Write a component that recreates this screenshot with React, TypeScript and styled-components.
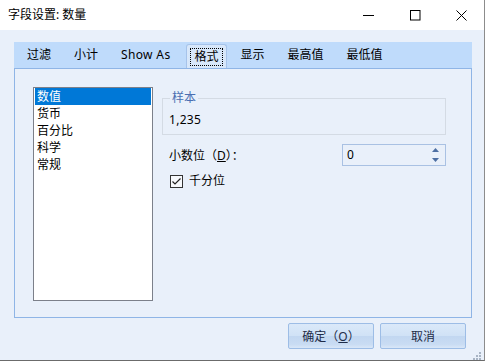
import React, { useState } from 'react';
import styled, { createGlobalStyle } from 'styled-components';

const GlobalStyle = createGlobalStyle`
  body {
    margin: 0;
    background: #ffffff;
    font-family: "Noto Sans", "Noto Sans CJK SC", sans-serif;
    font-size: 12px;
    color: #000;
  }
`;

const Window = styled.div`
  position: relative;
  width: 484px;
  height: 360px;
  border-right: 1px solid #8c8c8c;
  border-bottom: 1px solid #6b6b6b;
  display: flex;
  flex-direction: column;
  overflow: hidden;
`;

const TitleBar = styled.div`
  height: 30px;
  flex: none;
  background: #ffffff;
  display: flex;
  align-items: center;
  padding-left: 8px;
`;

const Title = styled.div`
  flex: 1;
  font-size: 12px;
  line-height: 16px;
  margin-top: -1px;
`;

const Control = styled.div`
  width: 46px;
  height: 30px;
  display: flex;
  align-items: center;
  justify-content: center;
`;

const Body = styled.div`
  flex: 1;
  background: #e9f0fa;
  padding: 12px 12px 0 14px;
  display: flex;
  flex-direction: column;
`;

const TabStrip = styled.div`
  height: 26px;
  background: #bfdbfb;
  display: flex;
  align-items: flex-end;
  padding-left: 5px;
  gap: 7px;
`;

const Tab = styled.div<{ $active?: boolean }>`
  height: ${p => (p.$active ? '24px' : '26px')};
  box-sizing: border-box;
  padding: 0 ${p => (p.$active ? '3px' : '8px')};
  display: flex;
  align-items: center;
  line-height: 16px;
  white-space: nowrap;
  background: ${p => (p.$active ? '#d7e7fa' : 'transparent')};
  border: ${p => (p.$active ? '1px solid #a6c3ea' : 'none')};
  border-bottom: none;
  border-radius: 3px 3px 0 0;
  margin: ${p => (p.$active ? '0 -1px 0 1px' : '0')};
`;

const Latin = styled.span`
  letter-spacing: 0.35px;
`;

const FocusRect = styled.span`
  border: 1px dotted #000;
  padding: 1px 3px;
  line-height: 14px;
`;

const Panel = styled.div`
  height: 250px;
  box-sizing: border-box;
  border: 1px solid #8fb5e6;
  padding: 18px 25px 0 18px;
  display: flex;
  gap: 9px;
`;

const ListBox = styled.div`
  width: 120px;
  height: 214px;
  box-sizing: border-box;
  border: 1px solid #7c808a;
  background: #ffffff;
  padding: 0 1px;
`;

const ListItem = styled.div<{ $selected?: boolean }>`
  height: 17px;
  line-height: 17px;
  padding-left: 2px;
  background: ${p => (p.$selected ? '#0078d7' : 'transparent')};
  color: ${p => (p.$selected ? '#ffffff' : '#000000')};
`;

const RightColumn = styled.div`
  flex: 1;
  display: flex;
  flex-direction: column;
`;

const GroupBox = styled.fieldset`
  margin: 4px 0 0 0;
  padding: 7px 6px 6px 6px;
  border: 1px solid #d4dbe4;
  min-width: 0;
`;

const Legend = styled.legend`
  padding: 0 2px;
  margin-left: 1px;
  color: #4b6fb2;
  line-height: 14px;
`;

const SampleValue = styled.div`
  line-height: 16px;
  letter-spacing: 0.3px;
`;

const FieldRow = styled.div`
  margin-top: 9px;
  display: flex;
  align-items: center;
  justify-content: space-between;
  padding-left: 7px;
`;

const Underline = styled.span`
  text-decoration: underline;
`;

const SpinBox = styled.div`
  width: 104px;
  height: 22px;
  box-sizing: border-box;
  border: 1px solid #a9c1e3;
  display: flex;
  align-items: center;
  justify-content: space-between;
  padding: 0 6px 0 4px;
  line-height: 16px;
`;

const SpinArrows = styled.div`
  display: flex;
  flex-direction: column;
  gap: 6px;
`;

const CheckRow = styled.label`
  margin-top: 7px;
  padding-left: 8px;
  display: flex;
  align-items: center;
  gap: 6px;
  line-height: 16px;
`;

const CheckBox = styled.span`
  width: 13px;
  height: 13px;
  box-sizing: border-box;
  border: 1px solid #333333;
  background: #f7f9fc;
  display: flex;
  align-items: center;
  justify-content: center;
`;

const Footer = styled.div`
  display: flex;
  justify-content: flex-end;
  gap: 6px;
  margin-top: 5px;
  padding-right: 6px;
`;

const Button = styled.button`
  width: 86px;
  height: 26px;
  box-sizing: border-box;
  border: 1px solid #9dbde6;
  border-radius: 2px;
  background: linear-gradient(
    to bottom,
    #dbe9f9 0%,
    #d0e2f6 48%,
    #c2d7f1 52%,
    #c9dcf3 85%,
    #d9e7f8 100%
  );
  font-family: "Noto Sans", "Noto Sans CJK SC", sans-serif;
  font-size: 12px;
  color: #1e2c48;
  padding: 0;
`;

const Grip = styled.div`
  position: absolute;
  right: 2px;
  bottom: 2px;
  width: 10px;
  height: 10px;
`;

const tabs = ['过滤', '小计', 'Show As', '格式', '显示', '最高值', '最低值'];
const formats = ['数值', '货币', '百分比', '科学', '常规'];

const App: React.FC = () => {
  const [selected, setSelected] = useState(0);
  const [thousands, setThousands] = useState(true);

  return (
    <Window>
      <GlobalStyle />
      <TitleBar>
        <Title>字段设置: 数量</Title>
        <Control>
          <svg width="12" height="12" viewBox="0 0 12 12">
            <path d="M0 6.5h11" stroke="#000" strokeWidth="1" />
          </svg>
        </Control>
        <Control>
          <svg width="11" height="11" viewBox="0 0 11 11">
            <rect x="0.5" y="0.5" width="9.5" height="9.5" fill="none" stroke="#000" strokeWidth="1" />
          </svg>
        </Control>
        <Control>
          <svg width="11" height="11" viewBox="0 0 11 11">
            <path d="M0.5 0.5L10.5 10.5M10.5 0.5L0.5 10.5" stroke="#000" strokeWidth="1" />
          </svg>
        </Control>
      </TitleBar>
      <Body>
        <TabStrip>
          {tabs.map(t =>
            t === '格式' ? (
              <Tab key={t} $active>
                <FocusRect>{t}</FocusRect>
              </Tab>
            ) : t === 'Show As' ? (
              <Tab key={t}>
                <Latin>{t}</Latin>
              </Tab>
            ) : (
              <Tab key={t}>{t}</Tab>
            )
          )}
        </TabStrip>
        <Panel>
          <ListBox>
            {formats.map((f, i) => (
              <ListItem key={f} $selected={i === selected} onClick={() => setSelected(i)}>
                {f}
              </ListItem>
            ))}
          </ListBox>
          <RightColumn>
            <GroupBox>
              <Legend>样本</Legend>
              <SampleValue>1,235</SampleValue>
            </GroupBox>
            <FieldRow>
              <span>
                小数位（<Underline>D</Underline>）：
              </span>
              <SpinBox>
                <span>0</span>
                <SpinArrows>
                  <svg width="7" height="4" viewBox="0 0 7 4">
                    <path d="M0 4L3.5 0L7 4Z" fill="#4d6fa3" />
                  </svg>
                  <svg width="7" height="4" viewBox="0 0 7 4">
                    <path d="M0 0L3.5 4L7 0Z" fill="#4d6fa3" />
                  </svg>
                </SpinArrows>
              </SpinBox>
            </FieldRow>
            <CheckRow onClick={() => setThousands(!thousands)}>
              <CheckBox>
                {thousands && (
                  <svg width="11" height="11" viewBox="0 0 11 11">
                    <path d="M1.5 5.5L4 8L9.5 2.5" fill="none" stroke="#222" strokeWidth="1.2" />
                  </svg>
                )}
              </CheckBox>
              <span>千分位</span>
            </CheckRow>
          </RightColumn>
        </Panel>
        <Footer>
          <Button>
            确定（<Underline>O</Underline>）
          </Button>
          <Button>取消</Button>
        </Footer>
      </Body>
      <Grip>
        <svg width="10" height="10" viewBox="0 0 10 10">
          {[
            [7, 1],
            [4, 4],
            [7, 4],
            [1, 7],
            [4, 7],
            [7, 7],
          ].map(([x, y]) => (
            <rect key={`${x}-${y}`} x={x} y={y} width="2" height="2" fill="#a8b4c4" />
          ))}
        </svg>
      </Grip>
    </Window>
  );
};

export default App;
